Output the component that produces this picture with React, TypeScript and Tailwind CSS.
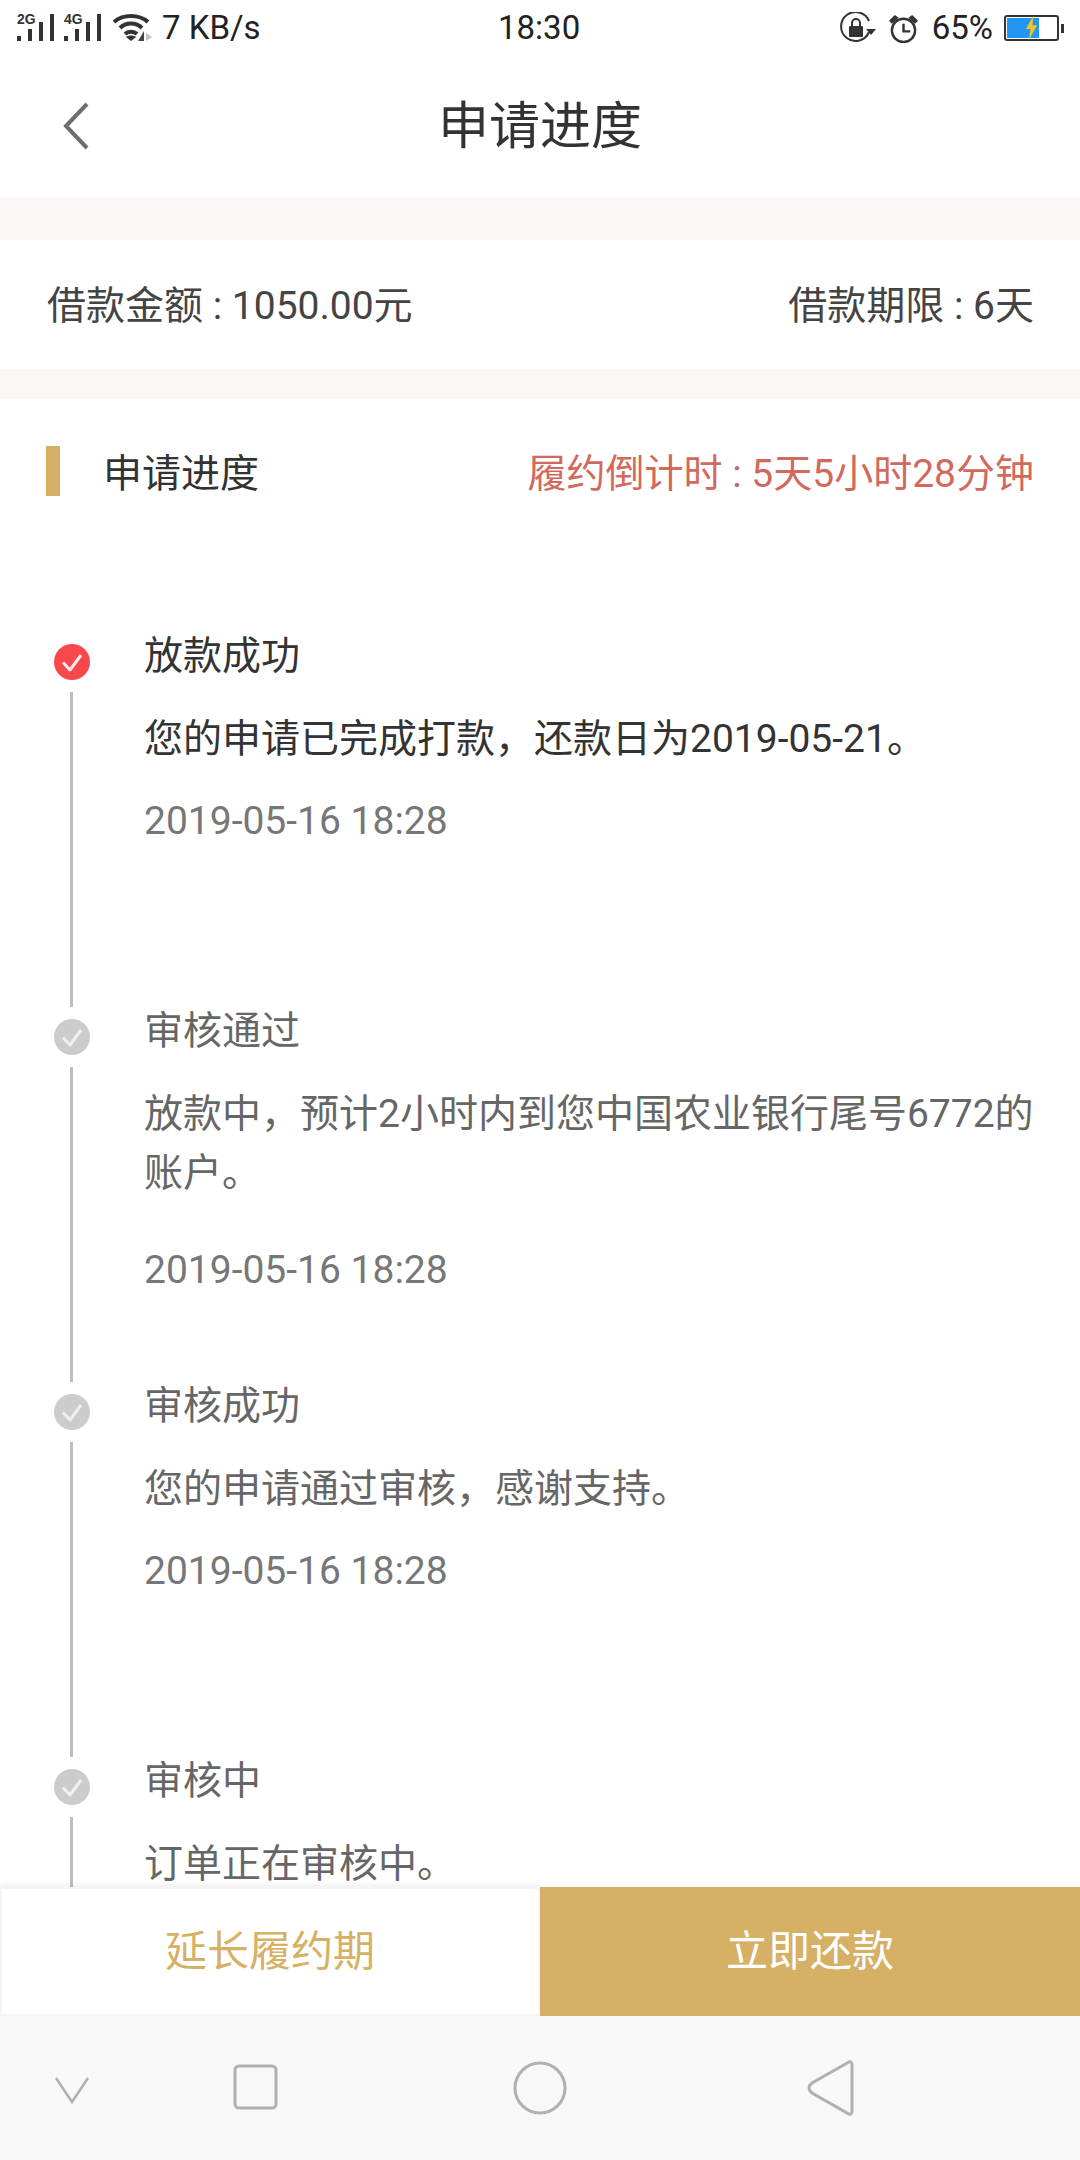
import React from 'react';

const cjk = 'font-["Roboto","Noto_Sans_CJK_SC",sans-serif]';

interface Step {
  title: string;
  lines: string[];
  date?: string;
  active?: boolean;
}

const steps: Step[] = [
  { title: '放款成功', lines: ['您的申请已完成打款，还款日为2019-05-21。'], date: '2019-05-16 18:28', active: true },
  { title: '审核通过', lines: ['放款中，预计2小时内到您中国农业银行尾号6772的', '账户。'], date: '2019-05-16 18:28' },
  { title: '审核成功', lines: ['您的申请通过审核，感谢支持。'], date: '2019-05-16 18:28' },
  { title: '审核中', lines: ['订单正在审核中。'] },
];

function Signal({ label }: { label: string }) {
  return (
    <div className="relative w-[37px] h-[28px]">
      <span className="absolute left-0 top-[-2px] text-[14px] leading-[14px] font-bold font-['Liberation_Sans',sans-serif] text-[#333]">{label}</span>
      <svg width="37" height="28" viewBox="0 0 37 28" className="absolute left-0 top-0">
        <rect x="0" y="22" width="4" height="5" fill="#333" />
        <rect x="11" y="15" width="4" height="12" fill="#333" />
        <rect x="22" y="8" width="4" height="19" fill="#333" />
        <rect x="33" y="0" width="4" height="27" fill="#333" />
      </svg>
    </div>
  );
}

function StatusBar() {
  return (
    <div className={`h-[55px] flex items-center justify-between pl-[17px] pr-[21px] relative ${cjk}`}>
      <div className="flex items-center">
        <Signal label="2G" />
        <div className="ml-[10px]">
          <Signal label="4G" />
        </div>
        <svg width="40" height="28" viewBox="0 0 40 28" className="ml-[12px]" fill="none" stroke="#333" strokeWidth="4">
          <path d="M1 8 C10 0 26 0 35 8" />
          <path d="M7 14 C13 8 23 8 29 14" />
          <path d="M12 20 C15 17 21 17 24 20" />
          <path d="M18 27 L13 23 C15 21 21 21 23 23 Z" fill="#333" stroke="none" />
          <path d="M31 27 L31 17 L25 27 Z" fill="#444" stroke="none" />
          <path d="M33 27 L33 19 L39 23 Z" fill="#c4c4c4" stroke="none" />
        </svg>
        <span className="ml-[9px] text-[33px] leading-[33px] text-[#222]">7 KB/s</span>
      </div>
      <span className="absolute left-[498px] top-[11px] text-[33px] leading-[33px] text-[#222]">18:30</span>
      <div className="flex items-center">
        <svg width="36" height="32" viewBox="0 0 36 32" fill="none">
          <path d="M29 20 A14.5 14.5 0 1 1 29 9" stroke="#333" strokeWidth="2" />
          <path d="M26 17 L36 17 L31 23 Z" fill="#333" />
          <rect x="9" y="14" width="14" height="11" rx="1" fill="#333" />
          <path d="M12 14 V11 A4 4 0 0 1 20 11 V14" stroke="#333" strokeWidth="2" />
        </svg>
        <svg width="31" height="30" viewBox="0 0 32 31" fill="none" className="ml-[12px]">
          <circle cx="16" cy="18" r="12" stroke="#333" strokeWidth="2.5" />
          <path d="M16 11 V19 H23" stroke="#333" strokeWidth="2.5" />
          <path d="M1 8 L7 2 L11 5 L4 11 Z" fill="#333" />
          <path d="M31 8 L25 2 L21 5 L28 11 Z" fill="#333" />
        </svg>
        <span className="ml-[13px] text-[33px] leading-[33px] text-[#222]">65%</span>
        <div className="ml-[11px] relative w-[55px] h-[26px] border-[2px] border-[#333] rounded-[3px] p-[1px]">
          <div className="h-full w-[32px] bg-[#2196f3]" />
          <svg width="15" height="26" viewBox="0 0 16 26" className="absolute left-[18px] top-[-2px]">
            <path d="M10 0 L2 14 H7 L5 26 L14 10 H9 Z" fill="#f5c518" />
          </svg>
          <div className="absolute right-[-7px] top-[7px] w-[3px] h-[9px] bg-[#333]" />
        </div>
      </div>
    </div>
  );
}

function Dot({ active }: { active?: boolean }) {
  return (
    <svg width="36" height="36" viewBox="0 0 36 36">
      <circle cx="18" cy="18" r="18" fill={active ? '#f9484c' : '#cccccc'} />
      <path d="M9 18.5 L16 26 L27 11" fill="none" stroke={active ? '#ffe9e9' : '#f0f0f0'} strokeWidth="3" strokeLinejoin="round" />
    </svg>
  );
}

function TimelineItem({ step }: { step: Step }) {
  const titleColor = step.active ? 'text-[#333333]' : 'text-[#666666]';
  const dateGap = step.lines.length > 1 ? 'mt-[42px]' : 'mt-[27px]';
  return (
    <div className="relative h-[375px] shrink-0 pl-[144px]">
      <div className="absolute left-[54px] top-[13px]">
        <Dot active={step.active} />
      </div>
      <div className="absolute left-[70px] top-[61px] w-[3px] h-[315px] bg-[#bdbdbd]" />
      <div className={`text-[39px] leading-[50px] ${titleColor}`}>{step.title}</div>
      <div className={`mt-[29px] ${titleColor} text-[39px] leading-[59px]`}>
        {step.lines.map((line) => (
          <div key={line} className="whitespace-nowrap">{line}</div>
        ))}
      </div>
      {step.date && <div className={`${dateGap} text-[39px] leading-[50px] text-[#777777]`}>{step.date}</div>}
    </div>
  );
}

export default function App() {
  return (
    <div className={`w-[1080px] h-[2160px] bg-white flex flex-col overflow-hidden ${cjk}`}>
      <StatusBar />
      <div className="h-[142px] shrink-0 relative flex items-center justify-center">
        <svg width="30" height="48" viewBox="0 0 30 48" fill="none" className="absolute left-[60px] top-[47px]">
          <path d="M25 2 L4 24 L25 46" transform="translate(2 0)" stroke="#6e6e6e" strokeWidth="4" />
        </svg>
        <span className="text-[51px] leading-[60px] mt-[2px] text-[#333333]">申请进度</span>
      </div>
      <div className="h-[43px] shrink-0 bg-[#fcf8f8]" />
      <div className="h-[129px] shrink-0 flex items-center justify-between pl-[47px] pr-[46px] pt-[4px] text-[39px] text-[#444444]">
        <span>借款金额 : 1050.00元</span>
        <span>借款期限 : 6天</span>
      </div>
      <div className="h-[30px] shrink-0 bg-[#fcf8f8]" />
      <div className="h-[150px] shrink-0 flex items-start justify-between pl-[46px] pr-[46px] pt-[47px]">
        <div className="flex items-start">
          <div className="w-[14px] h-[50px] bg-[#d6b064]" />
          <span className="ml-[43px] mt-[3px] text-[39px] leading-[50px] text-[#333333]">申请进度</span>
        </div>
        <span className="mt-[3px] text-[39px] leading-[50px] text-[#d2695c]">履约倒计时 : 5天5小时28分钟</span>
      </div>
      <div className="flex-1 min-h-0 overflow-hidden flex flex-col pt-[82px]">
        {steps.map((step) => (
          <TimelineItem key={step.title} step={step} />
        ))}
      </div>
      <div className="h-[129px] shrink-0 flex relative">
        <div className="w-[540px] flex items-center justify-center p-[2px] shadow-[0_-2px_6px_rgba(0,0,0,0.08)] bg-[#f5f5f5]">
          <div className="w-full h-full bg-white flex items-center justify-center text-[42px] text-[#d6b064]">延长履约期</div>
        </div>
        <div className="w-[540px] bg-[#d6b064] flex items-center justify-center text-[42px] text-white">立即还款</div>
      </div>
      <div className="h-[144px] shrink-0 bg-[#f8f8f8] relative flex items-center justify-center">
        <svg width="1080" height="144" viewBox="0 0 1080 144" fill="none" stroke="#b0b0b0" strokeWidth="3">
          <path d="M56 62 L72 86 L88 62" strokeWidth="2.5" />
          <rect x="235" y="50" width="41" height="42" rx="4" />
          <circle cx="540" cy="72" r="25" />
          <path d="M849 46 L812 67 Q806 72 812 77 L849 98 Q852 99 852 95 L852 49 Q852 45 849 46 Z" />
        </svg>
      </div>
    </div>
  );
}
